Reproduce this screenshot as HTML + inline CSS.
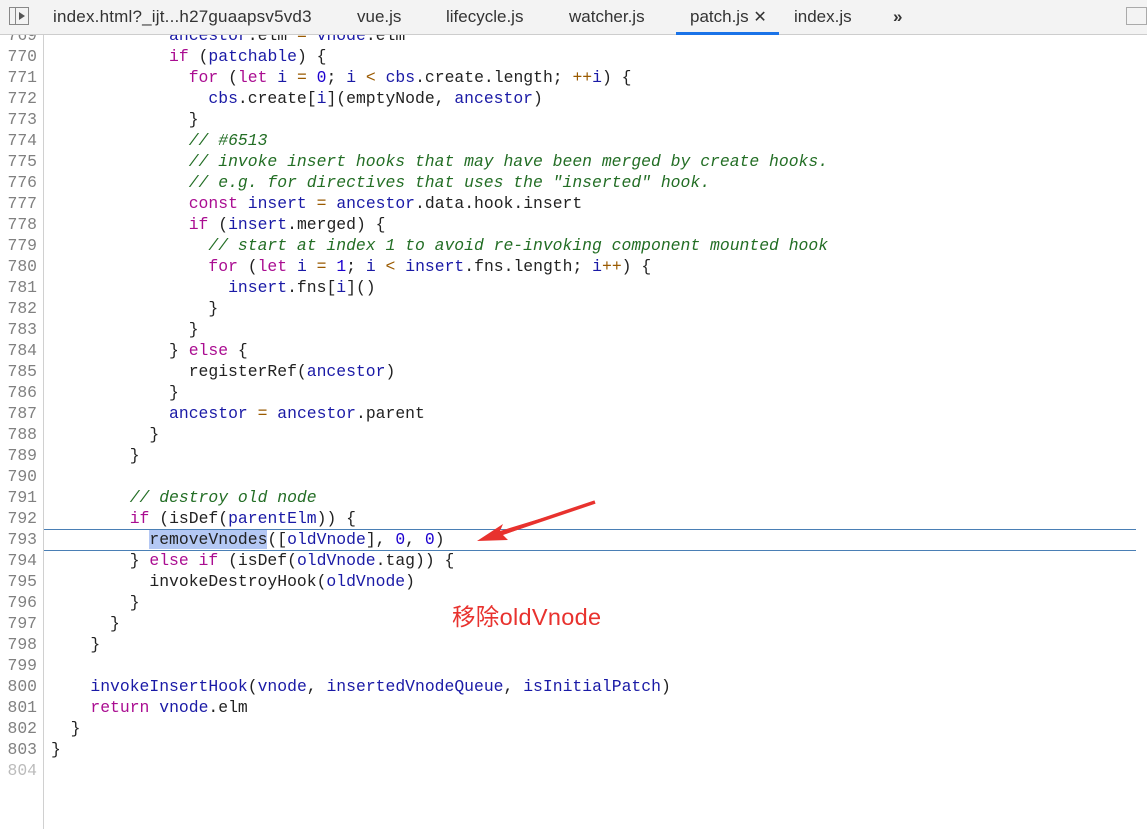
<!DOCTYPE html><html><head><meta charset="utf-8"><style>
body{margin:0;width:1147px;height:829px;overflow:hidden;background:#fff;position:relative;font-family:"Liberation Sans",sans-serif}
#tabs{position:absolute;left:0;top:0;width:1147px;height:34px;background:#f3f3f3;border-bottom:1px solid #cdcdcd;z-index:5;font-size:17px;color:#333}
#tabs span{position:absolute;top:7px}
#code{position:absolute;left:0;top:0;width:1147px;height:829px;font-family:"Liberation Mono",monospace;font-size:16.4px}
.l{position:absolute;left:0;height:21px;line-height:21px;white-space:pre;width:1147px}
.n{position:absolute;left:0;width:37px;text-align:right;color:#808080}
.c{position:absolute;left:51px;color:#222}
#gut{position:absolute;left:43px;top:0;width:1px;height:829px;background:#d0d0d0}
.k{color:#aa0d91}.v{color:#1a1aa6}.m{color:#1c00cf}.o{color:#9a5a00}.g{color:#236e25;font-style:italic}
</style></head><body>
<div id="tabs">
<div style="position:absolute;left:9px;top:7px;width:20px;height:18px;border:1px solid #888;box-sizing:border-box"><div style="position:absolute;left:5px;top:0;width:1px;height:16px;background:#888"></div><div style="position:absolute;left:9px;top:4px;border-left:6px solid #555;border-top:4px solid transparent;border-bottom:4px solid transparent"></div></div>
<span style="left:53px;letter-spacing:0.2px">index.html?_ijt...h27guaapsv5vd3</span>
<span style="left:357px">vue.js</span>
<span style="left:446px">lifecycle.js</span>
<span style="left:569px">watcher.js</span>
<span style="left:690px">patch.js <span style="position:static;font-size:16px">✕</span></span>
<span style="left:794px">index.js</span>
<span style="left:893px;font-weight:bold">»</span>
<div style="position:absolute;left:676px;top:32px;width:103px;height:3px;background:#1a73e8"></div>
<div style="position:absolute;left:1126px;top:7px;width:21px;height:18px;border:1px solid #aaa;box-sizing:border-box"></div>
</div>
<div id="gut"></div>
<div id="code">
<div style="position:absolute;left:44px;top:529px;width:1092px;height:22px;border-top:1px solid #4a7fb5;border-bottom:1px solid #4a7fb5;box-sizing:border-box"></div>
<div class="l" style="top:25px"><span class="n">769</span><span class="c">            <span class="v">ancestor</span>.elm <span class="o">=</span> <span class="v">vnode</span>.elm</span></div>
<div class="l" style="top:46px"><span class="n">770</span><span class="c">            <span class="k">if</span> (<span class="v">patchable</span>) {</span></div>
<div class="l" style="top:67px"><span class="n">771</span><span class="c">              <span class="k">for</span> (<span class="k">let</span> <span class="v">i</span> <span class="o">=</span> <span class="m">0</span>; <span class="v">i</span> <span class="o">&lt;</span> <span class="v">cbs</span>.create.length; <span class="o">++</span><span class="v">i</span>) {</span></div>
<div class="l" style="top:88px"><span class="n">772</span><span class="c">                <span class="v">cbs</span>.create[<span class="v">i</span>](emptyNode, <span class="v">ancestor</span>)</span></div>
<div class="l" style="top:109px"><span class="n">773</span><span class="c">              }</span></div>
<div class="l" style="top:130px"><span class="n">774</span><span class="c">              <span class="g">// #6513</span></span></div>
<div class="l" style="top:151px"><span class="n">775</span><span class="c">              <span class="g">// invoke insert hooks that may have been merged by create hooks.</span></span></div>
<div class="l" style="top:172px"><span class="n">776</span><span class="c">              <span class="g">// e.g. for directives that uses the "inserted" hook.</span></span></div>
<div class="l" style="top:193px"><span class="n">777</span><span class="c">              <span class="k">const</span> <span class="v">insert</span> <span class="o">=</span> <span class="v">ancestor</span>.data.hook.insert</span></div>
<div class="l" style="top:214px"><span class="n">778</span><span class="c">              <span class="k">if</span> (<span class="v">insert</span>.merged) {</span></div>
<div class="l" style="top:235px"><span class="n">779</span><span class="c">                <span class="g">// start at index 1 to avoid re-invoking component mounted hook</span></span></div>
<div class="l" style="top:256px"><span class="n">780</span><span class="c">                <span class="k">for</span> (<span class="k">let</span> <span class="v">i</span> <span class="o">=</span> <span class="m">1</span>; <span class="v">i</span> <span class="o">&lt;</span> <span class="v">insert</span>.fns.length; <span class="v">i</span><span class="o">++</span>) {</span></div>
<div class="l" style="top:277px"><span class="n">781</span><span class="c">                  <span class="v">insert</span>.fns[<span class="v">i</span>]()</span></div>
<div class="l" style="top:298px"><span class="n">782</span><span class="c">                }</span></div>
<div class="l" style="top:319px"><span class="n">783</span><span class="c">              }</span></div>
<div class="l" style="top:340px"><span class="n">784</span><span class="c">            } <span class="k">else</span> {</span></div>
<div class="l" style="top:361px"><span class="n">785</span><span class="c">              registerRef(<span class="v">ancestor</span>)</span></div>
<div class="l" style="top:382px"><span class="n">786</span><span class="c">            }</span></div>
<div class="l" style="top:403px"><span class="n">787</span><span class="c">            <span class="v">ancestor</span> <span class="o">=</span> <span class="v">ancestor</span>.parent</span></div>
<div class="l" style="top:424px"><span class="n">788</span><span class="c">          }</span></div>
<div class="l" style="top:445px"><span class="n">789</span><span class="c">        }</span></div>
<div class="l" style="top:466px"><span class="n">790</span><span class="c"></span></div>
<div class="l" style="top:487px"><span class="n">791</span><span class="c">        <span class="g">// destroy old node</span></span></div>
<div class="l" style="top:508px"><span class="n">792</span><span class="c">        <span class="k">if</span> (isDef(<span class="v">parentElm</span>)) {</span></div>
<div class="l" style="top:529px"><span class="n">793</span><span class="c">          <span style="background:#b4c8f4">removeVnodes</span>([<span class="v">oldVnode</span>], <span class="m">0</span>, <span class="m">0</span>)</span></div>
<div class="l" style="top:550px"><span class="n">794</span><span class="c">        } <span class="k">else if</span> (isDef(<span class="v">oldVnode</span>.tag)) {</span></div>
<div class="l" style="top:571px"><span class="n">795</span><span class="c">          invokeDestroyHook(<span class="v">oldVnode</span>)</span></div>
<div class="l" style="top:592px"><span class="n">796</span><span class="c">        }</span></div>
<div class="l" style="top:613px"><span class="n">797</span><span class="c">      }</span></div>
<div class="l" style="top:634px"><span class="n">798</span><span class="c">    }</span></div>
<div class="l" style="top:655px"><span class="n">799</span><span class="c"></span></div>
<div class="l" style="top:676px"><span class="n">800</span><span class="c">    <span class="v">invokeInsertHook</span>(<span class="v">vnode</span>, <span class="v">insertedVnodeQueue</span>, <span class="v">isInitialPatch</span>)</span></div>
<div class="l" style="top:697px"><span class="n">801</span><span class="c">    <span class="k">return</span> <span class="v">vnode</span>.elm</span></div>
<div class="l" style="top:718px"><span class="n">802</span><span class="c">  }</span></div>
<div class="l" style="top:739px"><span class="n">803</span><span class="c">}</span></div>
<div class="l" style="top:760px"><span class="n" style="color:#bbb">804</span></div>
</div>
<svg style="position:absolute;left:0;top:0" width="1147" height="829"><path d="M595 502 L500 531 L503 524 L477 541 L508 540 L503 535 Z" fill="#e8322e"/><path d="M595 502 L503 533" stroke="#e8322e" stroke-width="3.5"/></svg>
<div style="position:absolute;left:452px;top:598px;font-size:23.5px;color:#e8322e;font-family:'Liberation Sans','Noto Sans CJK SC',sans-serif;letter-spacing:0.3px">移除oldVnode</div>
</body></html>
